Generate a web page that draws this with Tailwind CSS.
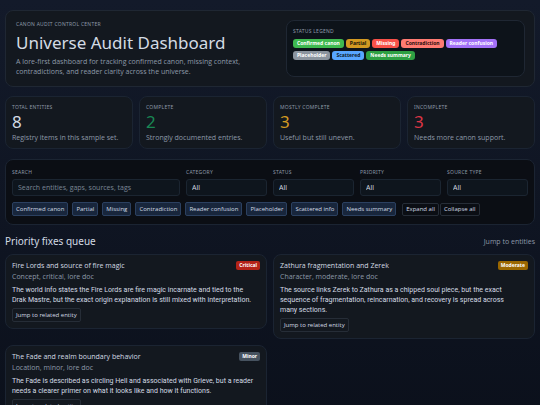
<!DOCTYPE html>
<html lang="en">
<head>
  <meta charset="UTF-8">
  <meta name="viewport" content="width=device-width, initial-scale=1.0">
  <title>Universe Audit Dashboard</title>
  <script src="https://cdn.jsdelivr.net/npm/@tailwindcss/browser@4"></script>
</head>
<body class="min-h-screen bg-[#0d1320] bg-linear-to-b from-[#131a2a] to-[#0b101b] font-['Open_Sans',sans-serif] text-[7px] leading-[10px] text-[#d3dbe4]">
  <div class="px-[5px] pt-[10px] pb-[10px]">

    <!-- Header -->
    <header class="flex justify-between gap-5 rounded-lg border border-[#1f2733] bg-[#13181f] py-[9px] pr-[9px] pl-[10px]">
      <div class="w-[230px]">
        <p class="font-['Noto_Sans',sans-serif] text-[5px] leading-[8px] tracking-wider uppercase text-[#8d99a8]">Canon audit control center</p>
        <h1 class="mt-1 font-['Noto_Sans',sans-serif] text-[17px] leading-[21px]">Universe Audit Dashboard</h1>
        <p class="mt-1 text-[#8d99a8]">A lore-first dashboard for tracking confirmed canon, missing context, contradictions, and reader clarity across the universe.</p>
      </div>
      <section class="w-[239px] rounded-lg border border-[#1f2733] bg-[#0d131a] px-[6px] pt-[6px] pb-4 font-['Noto_Sans',sans-serif]">
        <h2 class="text-[5px] leading-[8px] tracking-wider uppercase text-[#8d99a8]">Status legend</h2>
        <div class="mt-1 flex flex-wrap gap-x-[2px] gap-y-[3px] text-[5px] leading-[9px] font-bold">
          <span class="rounded-[3px] bg-[#3fb950] px-1 text-white">Confirmed canon</span>
          <span class="rounded-[3px] bg-[#d29922] px-1 text-[#16130a]">Partial</span>
          <span class="rounded-[3px] bg-[#f85149] px-1 text-white">Missing</span>
          <span class="rounded-[3px] bg-[#ff7b72] px-1 text-[#2b0d0d]">Contradiction</span>
          <span class="rounded-[3px] bg-[#a371f7] px-1 text-white">Reader confusion</span>
          <span class="rounded-[3px] bg-[#8b949e] px-1 text-white">Placeholder</span>
          <span class="rounded-[3px] bg-[#58a6ff] px-1 text-[#0d1a2b]">Scattered</span>
          <span class="rounded-[3px] bg-[#2ea043] px-1 text-white">Needs summary</span>
        </div>
      </section>
    </header>

    <!-- Summary cards -->
    <section class="mt-[9px] grid grid-cols-4 gap-[6px]">
      <div class="rounded-lg border border-[#1b2432] bg-[#13181f] px-[6px] pt-[6px] pb-[5px]">
        <h2 class="font-['Noto_Sans',sans-serif] text-[5px] leading-[8px] tracking-wider uppercase text-[#8d99a8]">Total entities</h2>
        <p class="font-['Noto_Sans',sans-serif] text-[17px] leading-[21px]">8</p>
        <p class="mt-px text-[#8d99a8]">Registry items in this sample set.</p>
      </div>
      <div class="rounded-lg border border-[#1b2432] bg-[#13181f] px-[6px] pt-[6px] pb-[5px]">
        <h2 class="font-['Noto_Sans',sans-serif] text-[5px] leading-[8px] tracking-wider uppercase text-[#8d99a8]">Complete</h2>
        <p class="font-['Noto_Sans',sans-serif] text-[17px] leading-[21px] text-[#198754]">2</p>
        <p class="mt-px text-[#8d99a8]">Strongly documented entries.</p>
      </div>
      <div class="rounded-lg border border-[#1b2432] bg-[#13181f] px-[6px] pt-[6px] pb-[5px]">
        <h2 class="font-['Noto_Sans',sans-serif] text-[5px] leading-[8px] tracking-wider uppercase text-[#8d99a8]">Mostly complete</h2>
        <p class="font-['Noto_Sans',sans-serif] text-[17px] leading-[21px] text-[#d29922]">3</p>
        <p class="mt-px text-[#8d99a8]">Useful but still uneven.</p>
      </div>
      <div class="rounded-lg border border-[#1b2432] bg-[#13181f] px-[6px] pt-[6px] pb-[5px]">
        <h2 class="font-['Noto_Sans',sans-serif] text-[5px] leading-[8px] tracking-wider uppercase text-[#8d99a8]">Incomplete</h2>
        <p class="font-['Noto_Sans',sans-serif] text-[17px] leading-[21px] text-[#dc3545]">3</p>
        <p class="mt-px text-[#8d99a8]">Needs more canon support.</p>
      </div>
    </section>

    <!-- Filters -->
    <section class="mt-[10px] rounded-lg border border-[#1b2432] bg-[#0b0e14] px-[6px] pt-2 pb-2">
      <div class="grid grid-cols-[168fr_81fr_81fr_81fr_81fr] gap-[6px]">
        <div>
          <label for="search" class="block font-['Noto_Sans',sans-serif] text-[5px] leading-[8px] tracking-wider uppercase text-[#8d99a8]">Search</label>
          <input id="search" type="text" placeholder="Search entities, gaps, sources, tags" class="mt-[3px] block h-[17px] w-full rounded-[3px] border border-[#1b2531] bg-[#0e151d] px-[5px] placeholder:text-[#7b8695]">
        </div>
        <div>
          <label for="category" class="block font-['Noto_Sans',sans-serif] text-[5px] leading-[8px] tracking-wider uppercase text-[#8d99a8]">Category</label>
          <select id="category" class="mt-[3px] block h-[17px] w-full appearance-none rounded-[3px] border border-[#1b2531] bg-[#0e151d] px-[5px]"><option>All</option></select>
        </div>
        <div>
          <label for="status" class="block font-['Noto_Sans',sans-serif] text-[5px] leading-[8px] tracking-wider uppercase text-[#8d99a8]">Status</label>
          <select id="status" class="mt-[3px] block h-[17px] w-full appearance-none rounded-[3px] border border-[#1b2531] bg-[#0e151d] px-[5px]"><option>All</option></select>
        </div>
        <div>
          <label for="priority" class="block font-['Noto_Sans',sans-serif] text-[5px] leading-[8px] tracking-wider uppercase text-[#8d99a8]">Priority</label>
          <select id="priority" class="mt-[3px] block h-[17px] w-full appearance-none rounded-[3px] border border-[#1b2531] bg-[#0e151d] px-[5px]"><option>All</option></select>
        </div>
        <div>
          <label for="source" class="block font-['Noto_Sans',sans-serif] text-[5px] leading-[8px] tracking-wider uppercase text-[#8d99a8]">Source type</label>
          <select id="source" class="mt-[3px] block h-[17px] w-full appearance-none rounded-[3px] border border-[#1b2531] bg-[#0e151d] px-[5px]"><option>All</option></select>
        </div>
      </div>
      <div class="mt-[6px] flex items-end gap-[6px] text-[6px] leading-[12px]">
        <div class="flex flex-wrap gap-1">
          <button class="rounded-xs border border-[#2b4060] bg-[#18263c] px-[3px]">Confirmed canon</button>
          <button class="rounded-xs border border-[#2b4060] bg-[#18263c] px-[3px]">Partial</button>
          <button class="rounded-xs border border-[#2b4060] bg-[#18263c] px-[3px]">Missing</button>
          <button class="rounded-xs border border-[#2b4060] bg-[#18263c] px-[3px]">Contradiction</button>
          <button class="rounded-xs border border-[#2b4060] bg-[#18263c] px-[3px]">Reader confusion</button>
          <button class="rounded-xs border border-[#2b4060] bg-[#18263c] px-[3px]">Placeholder</button>
          <button class="rounded-xs border border-[#2b4060] bg-[#18263c] px-[3px]">Scattered info</button>
          <button class="rounded-xs border border-[#2b4060] bg-[#18263c] px-[3px]">Needs summary</button>
        </div>
        <div class="flex gap-px leading-[11px]">
          <button class="rounded-xs border border-[#262d37] px-[3px]">Expand all</button>
          <button class="rounded-xs border border-[#262d37] px-[3px]">Collapse all</button>
        </div>
      </div>
    </section>

    <!-- Priority fixes -->
    <section class="mt-[9px]">
      <div class="flex items-end justify-between">
        <h2 class="font-['Noto_Sans',sans-serif] text-[10px] leading-[14px]">Priority fixes queue</h2>
        <a href="#entities" class="leading-[12px] text-[#8d99a8]">Jump to entities</a>
      </div>
      <div class="mt-[6px] grid grid-cols-2 items-start gap-[6px]">
        <article class="rounded-lg border border-[#1b2432] bg-[#13181f] px-[6px] pt-[5px] pb-[6px]">
          <div class="flex items-start justify-between leading-[11px]">
            <div>
              <h3>Fire Lords and source of fire magic</h3>
              <p class="text-[#8d99a8]">Concept, critical, lore doc</p>
            </div>
            <span class="mt-px rounded-xs bg-[#b42318] px-[3px] font-['Noto_Sans',sans-serif] text-[5px] leading-[9px] font-bold text-white">Critical</span>
          </div>
          <p class="mt-[3px] font-[Roboto,sans-serif]">The world info states the Fire Lords are fire magic incarnate and tied to the<br>Drak Mastre, but the exact origin explanation is still mixed with interpretation.</p>
          <button class="mt-[3px] block rounded-xs border border-[#262d37] px-[3px] text-[6px] leading-[12px]">Jump to related entity</button>
        </article>
        <article class="rounded-lg border border-[#1b2432] bg-[#13181f] px-[6px] pt-[5px] pb-[6px]">
          <div class="flex items-start justify-between leading-[11px]">
            <div>
              <h3>Zathura fragmentation and Zerek</h3>
              <p class="text-[#8d99a8]">Character, moderate, lore doc</p>
            </div>
            <span class="mt-px rounded-xs bg-[#9a6700] px-[3px] font-['Noto_Sans',sans-serif] text-[5px] leading-[9px] font-bold text-white">Moderate</span>
          </div>
          <p class="mt-[3px] font-[Roboto,sans-serif]">The source links Zerek to Zathura as a chipped soul piece, but the exact<br>sequence of fragmentation, reincarnation, and recovery is spread across<br>many sections.</p>
          <button class="mt-[3px] block rounded-xs border border-[#262d37] px-[3px] text-[6px] leading-[12px]">Jump to related entity</button>
        </article>
        <article class="rounded-lg border border-[#1b2432] bg-[#13181f] px-[6px] pt-[5px] pb-[6px]">
          <div class="flex items-start justify-between leading-[11px]">
            <div>
              <h3>The Fade and realm boundary behavior</h3>
              <p class="text-[#8d99a8]">Location, minor, lore doc</p>
            </div>
            <span class="mt-px rounded-xs bg-[#46525f] px-[3px] font-['Noto_Sans',sans-serif] text-[5px] leading-[9px] font-bold text-white">Minor</span>
          </div>
          <p class="mt-[3px] font-[Roboto,sans-serif]">The Fade is described as circling Hell and associated with Grieve, but a reader<br>needs a clearer primer on what it looks like and how it functions.</p>
          <button class="mt-[3px] block rounded-xs border border-[#262d37] px-[3px] text-[6px] leading-[12px]">Jump to related entity</button>
        </article>
      </div>
    </section>
  </div>
</body>
</html>
